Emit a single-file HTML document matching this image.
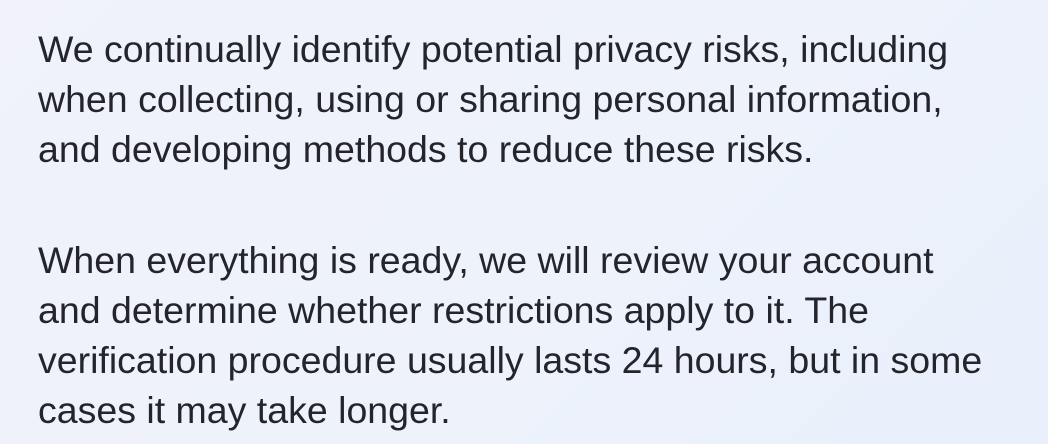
<!DOCTYPE html>
<html><head><meta charset="utf-8"><style>
html,body{margin:0;padding:0;}
body{width:1048px;height:444px;overflow:hidden;background:linear-gradient(135deg,#f1f2fb 0%,#eef2fb 50%,#e9f0fb 100%);font-family:"Liberation Sans",Arial,sans-serif;color:#23252b;}
p{position:absolute;left:38px;margin:0;font-size:37.5px;line-height:50px;width:1010px;white-space:nowrap;}
</style></head><body>
<p style="top:24px">We continually identify potential privacy risks, including<br>when collecting, using or sharing personal information,<br>and developing methods to reduce these risks.</p>
<p style="top:235px">When everything is ready, we will review your account<br>and determine whether restrictions apply to it. The<br>verification procedure usually lasts 24 hours, but in some<br>cases it may take longer.</p>
</body></html>
